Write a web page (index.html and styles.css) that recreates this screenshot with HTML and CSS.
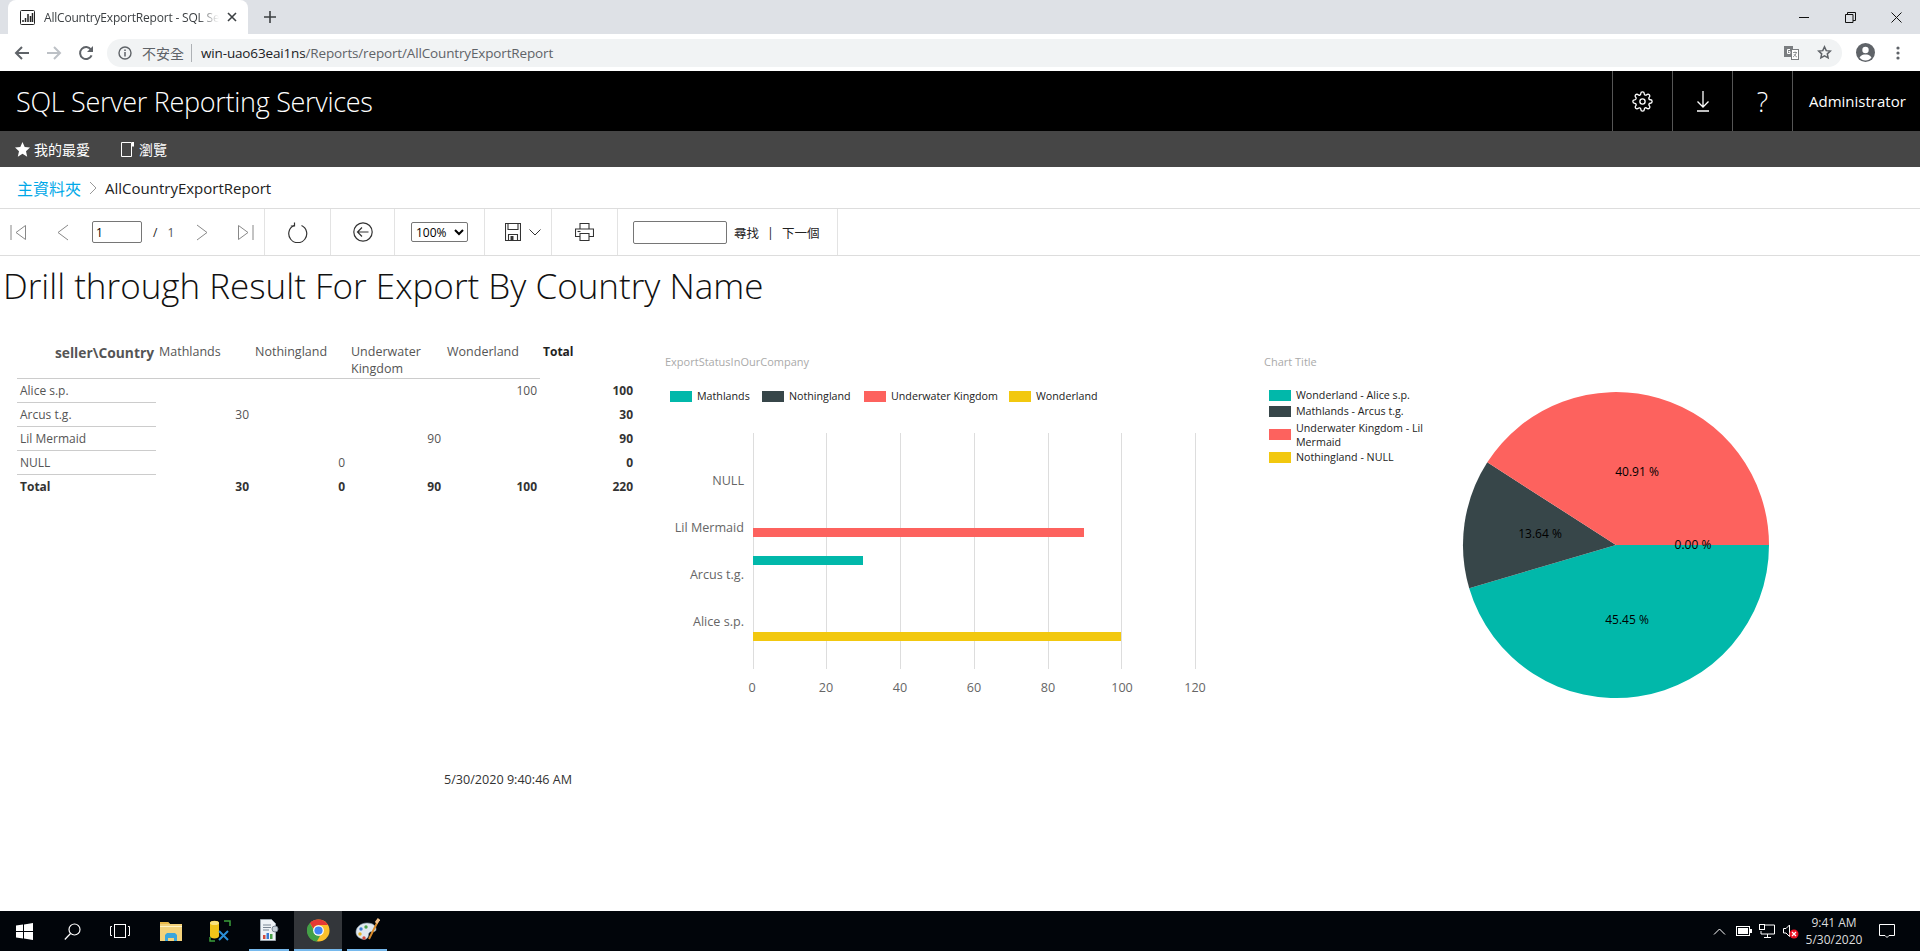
FILE: index.html
```html
<!DOCTYPE html>
<html lang="zh-Hant">
<head>
    <meta charset="UTF-8">
    <title>AllCountryExportReport - SQL Server Reporting Services</title>
    <link rel="stylesheet" href="styles.css">
</head>
<body>
    <div class="browser-tabs">
        <div class="tab">
            <svg class="tab-icon" width="15" height="15" viewBox="0 0 15 15"><rect x="0.5" y="0.5" width="14" height="14" rx="1" fill="#fff" stroke="#222"/><path d="M3 12v-2M5.5 12V8M8 12V4M10.5 12V6M12.5 12V3" stroke="#222" stroke-width="1.5"/></svg>
            <span class="tab-title">AllCountryExportReport - SQL Server Reporting Services</span>
            <svg width="10" height="10" viewBox="0 0 10 10"><path d="M1 1l8 8M9 1l-8 8" stroke="#3c4043" stroke-width="1.6"/></svg>
        </div>
        <svg class="new-tab" width="12" height="12" viewBox="0 0 12 12"><path d="M6 0v12M0 6h12" stroke="#3c4043" stroke-width="1.6"/></svg>
        <div class="window-controls">
            <svg width="11" height="11" viewBox="0 0 11 11"><path d="M0 5.5h10" stroke="#111"/></svg>
            <svg width="11" height="11" viewBox="0 0 11 11"><path d="M0.5 2.5h7.5v8H0.5zM2.5 2.5V0.5h8v8H8" fill="none" stroke="#111"/></svg>
            <svg width="11" height="11" viewBox="0 0 11 11"><path d="M0.5 0.5l10 10M10.5 0.5l-10 10" stroke="#111"/></svg>
        </div>
    </div>

    <div class="browser-bar">
        <svg width="16" height="16" viewBox="0 0 16 16"><path d="M15 8H2M8 2L2 8l6 6" fill="none" stroke="#5f6368" stroke-width="2"/></svg>
        <svg class="bar-forward" width="16" height="16" viewBox="0 0 16 16"><path d="M1 8h13M8 2l6 6-6 6" fill="none" stroke="#bdc1c6" stroke-width="2"/></svg>
        <svg class="bar-reload" width="16" height="16" viewBox="0 0 16 16"><path d="M13.600 10.400A6 6 0 1 1 13 4.600" fill="none" stroke="#5f6368" stroke-width="2"/><path d="M15 1v6H9z" fill="#5f6368"/></svg>
        <div class="omnibox">
            <svg width="14" height="14" viewBox="0 0 14 14"><circle cx="7" cy="7" r="6" fill="none" stroke="#5f6368" stroke-width="1.4"/><path d="M7 6v4.400M7 3.400v1.500" stroke="#5f6368" stroke-width="1.5"/></svg>
            <span class="not-secure">不安全</span>
            <span class="omni-sep"></span>
            <span class="url"><b>win-uao63eai1ns</b>/Reports/report/AllCountryExportReport</span>
            <svg class="omni-translate" width="15" height="14" viewBox="0 0 15 14"><rect x="0" y="0" width="9" height="11" fill="#7a7d80"/><path d="M6 3.500H3.500v4H6V5.500H4.500" fill="none" stroke="#fff"/><rect x="7.500" y="3.500" width="7" height="10" fill="#fff" stroke="#7a7d80"/><path d="M9 6.500h4M11 5.500v1M12.300 6.500c-.4 2-1.600 3.500-3.300 4.500M10 8c.5 1.300 1.500 2.300 3 3" fill="none" stroke="#7a7d80" stroke-width=".8"/></svg>
            <svg class="omni-star" width="15" height="15" viewBox="0 0 24 24"><path d="M12 3l2.800 6 6.500.8-4.800 4.400 1.300 6.500L12 17.500l-5.800 3.200 1.300-6.500-4.800-4.400 6.500-.8z" fill="none" stroke="#5f6368" stroke-width="2.400"/></svg>
        </div>
        <svg class="profile" width="19" height="19" viewBox="0 0 19 19"><circle cx="9.500" cy="9.500" r="9.500" fill="#5f6368"/><circle cx="9.500" cy="7" r="3.200" fill="#fff"/><path d="M3.500 14.500c1.500-2.500 3.800-3 6-3s4.500.5 6 3c-1.500 2-3.500 3-6 3s-4.500-1-6-3z" fill="#fff"/></svg>
        <svg class="browser-menu" width="4" height="14" viewBox="0 0 4 14"><circle cx="2" cy="2" r="1.600" fill="#5f6368"/><circle cx="2" cy="7" r="1.600" fill="#5f6368"/><circle cx="2" cy="12" r="1.600" fill="#5f6368"/></svg>
    </div>

    <div class="app-header">
        <div class="app-title">SQL Server Reporting Services</div>
        <div class="header-btn">
            <svg width="21" height="21" viewBox="0 0 24 24" fill="none" stroke="#fff" stroke-width="1.500"><circle cx="12" cy="12" r="3"/><path d="M19.400 15a1.650 1.650 0 0 0 .33 1.820l.06.06a2 2 0 0 1 0 2.830 2 2 0 0 1-2.830 0l-.06-.06a1.650 1.650 0 0 0-1.820-.33 1.650 1.650 0 0 0-1 1.510V21a2 2 0 0 1-2 2 2 2 0 0 1-2-2v-.09A1.650 1.650 0 0 0 9 19.400a1.650 1.650 0 0 0-1.820.33l-.06.06a2 2 0 0 1-2.830 0 2 2 0 0 1 0-2.830l.06-.06a1.650 1.650 0 0 0 .33-1.820 1.650 1.650 0 0 0-1.510-1H3a2 2 0 0 1-2-2 2 2 0 0 1 2-2h.09A1.650 1.650 0 0 0 4.600 9a1.650 1.650 0 0 0-.33-1.820l-.06-.06a2 2 0 0 1 0-2.830 2 2 0 0 1 2.830 0l.06.06a1.650 1.650 0 0 0 1.820.33H9a1.650 1.650 0 0 0 1-1.510V3a2 2 0 0 1 2-2 2 2 0 0 1 2 2v.09a1.650 1.650 0 0 0 1 1.510 1.650 1.650 0 0 0 1.820-.33l.06-.06a2 2 0 0 1 2.830 0 2 2 0 0 1 0 2.830l-.06.06a1.650 1.650 0 0 0-.33 1.820V9a1.650 1.650 0 0 0 1.510 1H21a2 2 0 0 1 2 2 2 2 0 0 1-2 2h-.09a1.650 1.650 0 0 0-1.510 1z"/></svg>
        </div>
        <div class="header-btn">
            <svg width="14" height="21" viewBox="0 0 14 21" fill="none" stroke="#fff" stroke-width="1.300"><path d="M7 0v16M1.500 10.500L7 16l5.500-5.500M1 20h12"/></svg>
        </div>
        <div class="header-btn help-btn">?</div>
        <div class="header-user">Administrator</div>
    </div>

    <div class="app-nav">
        <span class="nav-item">
            <svg width="15" height="15" viewBox="0 0 15 15"><path d="M7.500 0l2.200 5.100 5.300.5-4 3.600 1.200 5.500-4.700-2.900-4.700 2.900 1.200-5.500-4-3.600 5.300-.5z" fill="#fff"/></svg>
            我的最愛
        </span>
        <span class="nav-item nav-browse">
            <svg width="13" height="15" viewBox="0 0 13 15"><path d="M0.500 0.500h10v14h-10z" fill="none" stroke="#fff"/><path d="M11 0h2v5l-1-1-1 1z" fill="#fff"/></svg>
            瀏覽
        </span>
    </div>

    <div class="breadcrumb">
        <a class="crumb-link">主資料夾</a>
        <svg width="8" height="14" viewBox="0 0 8 14"><path d="M1 1l6 6-6 6" fill="none" stroke="#999"/></svg>
        <span class="crumb-current">AllCountryExportReport</span>
    </div>

    <div class="report-toolbar">
        <div class="tool-group pager">
            <svg width="16" height="17" viewBox="0 0 16 17" fill="none" stroke="#888"><path d="M1 1v15"/><path d="M15.500 1.500L6 8.500l9.500 7z"/></svg>
            <svg class="pager-prev" width="13" height="17" viewBox="0 0 13 17" fill="none" stroke="#888"><path d="M12 1L2 8.500l10 7.500"/></svg>
            <input class="page-input" type="text" value="1">
            <span class="page-slash">/</span>
            <span class="page-total">1</span>
            <svg class="pager-next" width="12" height="17" viewBox="0 0 12 17" fill="none" stroke="#888"><path d="M1 1l10 7.500L1 16"/></svg>
            <svg class="pager-last" width="16" height="17" viewBox="0 0 16 17" fill="none" stroke="#888"><path d="M15 1v15"/><path d="M0.500 1.500l9.500 7-9.500 7z"/></svg>
        </div>
        <div class="tool-group refresh">
            <svg width="20" height="21" viewBox="0 0 20 21" fill="none" stroke="#333" stroke-width="1.200"><path d="M6 3.500a9 9 0 1 0 7.500 0"/><path d="M6.500 0.500V4H2.800"/></svg>
        </div>
        <div class="tool-group back">
            <svg width="20" height="20" viewBox="0 0 20 20" fill="none" stroke="#333" stroke-width="1.200"><circle cx="10" cy="10" r="9.200"/><path d="M15.500 10H4.500M9 5.500L4.500 10 9 14.500"/></svg>
        </div>
        <div class="tool-group zoom">
            <select class="zoom-select"><option>100%</option></select>
        </div>
        <div class="tool-group save">
            <svg width="16" height="18" viewBox="0 0 16 18" fill="none" stroke="#333" stroke-width="1.100"><path d="M0.500 0.500h15v17H0.500z"/><path d="M3 0.500v6h10v-6M3.500 17.500v-6h9v6"/><rect x="5.500" y="13" width="3" height="4.500" fill="#333" stroke="none"/></svg>
            <svg width="12" height="7" viewBox="0 0 12 7" fill="none" stroke="#333"><path d="M0.500 0.500L6 6l5.500-5.500"/></svg>
        </div>
        <div class="tool-group print">
            <svg width="19" height="18" viewBox="0 0 19 18" fill="none" stroke="#333" stroke-width="1.100"><path d="M5 6V0.500h9V6M5 13.500H0.500V6h18v7.500H14"/><path d="M5 10.500h9v7H5z"/><path d="M2.500 8.500h3"/></svg>
        </div>
        <div class="tool-group find">
            <input class="find-input" type="text">
            <span>尋找</span>
            <span class="find-sep">|</span>
            <span>下一個</span>
        </div>
    </div>

    <main class="report">
        <h1 class="report-title">Drill through Result For Export By Country Name</h1>
        <div class="report-row">
            <div class="matrix-wrap">
                <table class="matrix">
                    <thead>
                        <tr>
                            <th class="corner">seller\Country</th>
                            <th>Mathlands</th>
                            <th>Nothingland</th>
                            <th>Underwater Kingdom</th>
                            <th>Wonderland</th>
                            <th class="total-head">Total</th>
                        </tr>
                    </thead>
                    <tbody>
                        <tr><td class="seller">Alice s.p.</td><td></td><td></td><td></td><td>100</td><td class="strong">100</td></tr>
                        <tr><td class="seller">Arcus t.g.</td><td>30</td><td></td><td></td><td></td><td class="strong">30</td></tr>
                        <tr><td class="seller">Lil Mermaid</td><td></td><td></td><td>90</td><td></td><td class="strong">90</td></tr>
                        <tr><td class="seller">NULL</td><td></td><td>0</td><td></td><td></td><td class="strong">0</td></tr>
                        <tr class="total-row"><td class="seller">Total</td><td>30</td><td>0</td><td>90</td><td>100</td><td>220</td></tr>
                    </tbody>
                </table>
            </div>

            <svg class="chart" width="600" height="380" viewBox="650 340 600 380">
                <text class="chart-title" x="665" y="365">ExportStatusInOurCompany</text>
                <rect class="c-teal" x="670" y="390" width="22" height="11"/>
                <text class="legend-text" x="697" y="399">Mathlands</text>
                <rect class="c-dark" x="762" y="390" width="22" height="11"/>
                <text class="legend-text" x="789" y="399">Nothingland</text>
                <rect class="c-red" x="864" y="390" width="22" height="11"/>
                <text class="legend-text" x="891" y="399">Underwater Kingdom</text>
                <rect class="c-yellow" x="1009" y="390" width="22" height="11"/>
                <text class="legend-text" x="1036" y="399">Wonderland</text>

                <path class="grid" d="M753.500 432v236M826.500 432v236M900.500 432v236M974.500 432v236M1048.500 432v236M1121.500 432v236M1195.500 432v236"/>

                <rect class="c-red" x="753" y="527" width="331" height="9"/>
                <rect class="c-teal" x="753" y="555" width="110" height="9"/>
                <rect class="c-yellow" x="753" y="631" width="368" height="9"/>

                <text class="axis-text end" x="744" y="484">NULL</text>
                <text class="axis-text end" x="744" y="531">Lil Mermaid</text>
                <text class="axis-text end" x="744" y="578">Arcus t.g.</text>
                <text class="axis-text end" x="744" y="625">Alice s.p.</text>

                <text class="axis-text mid" x="752" y="691">0</text>
                <text class="axis-text mid" x="826" y="691">20</text>
                <text class="axis-text mid" x="900" y="691">40</text>
                <text class="axis-text mid" x="974" y="691">60</text>
                <text class="axis-text mid" x="1048" y="691">80</text>
                <text class="axis-text mid" x="1122" y="691">100</text>
                <text class="axis-text mid" x="1195" y="691">120</text>
            </svg>

            <svg class="chart" width="540" height="380" viewBox="1250 340 540 380">
                <text class="chart-title" x="1264" y="365">Chart Title</text>
                <rect class="c-teal" x="1269" y="389" width="22" height="11"/>
                <text class="legend-text" x="1296" y="398">Wonderland - Alice s.p.</text>
                <rect class="c-dark" x="1269" y="405" width="22" height="11"/>
                <text class="legend-text" x="1296" y="414">Mathlands - Arcus t.g.</text>
                <rect class="c-red" x="1269" y="428" width="22" height="11"/>
                <text class="legend-text" x="1296" y="431">Underwater Kingdom - Lil</text>
                <text class="legend-text" x="1296" y="445">Mermaid</text>
                <rect class="c-yellow" x="1269" y="451" width="22" height="11"/>
                <text class="legend-text" x="1296" y="460">Nothingland - NULL</text>

                <path class="c-teal" d="M1616 544H1769A153 153 0 0 1 1469.200 587.200Z"/>
                <path class="c-dark" d="M1616 544L1469.200 587.200A153 153 0 0 1 1487.300 461.300Z"/>
                <path class="c-red" d="M1616 544L1487.300 461.300A153 153 0 0 1 1769 544Z"/>

                <text class="pie-text" x="1637" y="475">40.91 %</text>
                <text class="pie-text" x="1540" y="537">13.64 %</text>
                <text class="pie-text" x="1693" y="548">0.00 %</text>
                <text class="pie-text" x="1627" y="623">45.45 %</text>
            </svg>
        </div>
        <div class="report-date">5/30/2020 9:40:46 AM</div>
    </main>

    <div class="taskbar">
        <div class="task-left">
            <span class="task-btn">
                <svg width="17" height="17" viewBox="0 0 17 17"><path d="M0 2.600L7 1.600v6.400H0zM8 1.400L17 0v8H8zM0 9h7v6.400L0 14.400zM8 9h9v8L8 15.600z" fill="#fff"/></svg>
            </span>
            <span class="task-btn">
                <svg width="17" height="17" viewBox="0 0 17 17" fill="none" stroke="#fff" stroke-width="1.200"><circle cx="10.500" cy="6.500" r="5.500"/><path d="M6.500 10.500L0.800 16.500"/></svg>
            </span>
            <span class="task-btn">
                <svg width="20" height="14" viewBox="0 0 20 14" fill="none" stroke="#fff"><rect x="4.500" y="0.500" width="11" height="13"/><path d="M2 2.500H0.500v9H2M18 2.500h1.500v9H18"/></svg>
            </span>
            <span class="task-btn app-folder">
                <svg width="22" height="20" viewBox="0 0 22 20"><path d="M0 1h8l2 2h12v17H0z" fill="#f3d27b"/><path d="M0 1h8l2 2H0z" fill="#e9b949"/><path d="M0 5h22v1H0z" fill="#fff3c4"/><path d="M5 20v-6l2-2h8l2 2v6h-3v-3H8v3z" fill="#3aa5dc"/></svg>
            </span>
            <span class="task-btn app-tools">
                <svg width="22" height="22" viewBox="0 0 22 22"><path d="M1 3c0-3 9-3 9 0v13c0 1.500-2 2.500-4.500 2.500S1 17.500 1 16z" fill="#f0c419"/><ellipse cx="5.500" cy="3" rx="4.500" ry="2" fill="#f9e37c"/><path d="M15 1h6v5M1 17v4h5" fill="none" stroke="#3ba03b" stroke-width="1.500"/><path d="M10 11l9 9M19 11l-9 9" stroke="#2a8fd8" stroke-width="2"/></svg>
            </span>
            <span class="task-btn app-report">
                <svg width="19" height="22" viewBox="0 0 19 22"><path d="M0.500 0.500h11l4 4v17H0.500z" fill="#eef2f6" stroke="#9aa4ad"/><path d="M3 6h8M3 8.500h8M3 11h6" stroke="#7b8794"/><rect x="3" y="16" width="2.500" height="4" fill="#d34a3a"/><rect x="6.500" y="14" width="2.500" height="6" fill="#3a7bd3"/><rect x="10" y="15" width="2.500" height="5" fill="#4aa14a"/><circle cx="15" cy="10" r="3" fill="#c9d2da" stroke="#7b8794"/></svg>
            </span>
            <span class="task-btn active">
                <svg width="23" height="23" viewBox="0 0 24 24"><circle cx="12" cy="12" r="11.500" fill="#fbc02d"/><path d="M12 .5a11.500 11.500 0 0 1 10 5.800H12a5.700 5.700 0 0 0-5.400 3.800L3 4.200A11.500 11.500 0 0 1 12 .5z" fill="#e53935"/><path d="M3 4.200l5 8.800a5.700 5.700 0 0 0 5.700 4.500l-3.500 6A11.500 11.500 0 0 1 3 4.200z" fill="#43a047"/><circle cx="12" cy="12" r="5.600" fill="#fff"/><circle cx="12" cy="12" r="4.300" fill="#4285f4"/></svg>
            </span>
            <span class="task-btn paint">
                <svg width="25" height="25" viewBox="0 0 25 25"><path d="M1 14c0-5 5-9 11-9s9 3 9 6c0 4-4 2-6 3s-1 3-2 5-3 3-6 2-6-3-6-7z" fill="#dfe7ee" stroke="#8aa0b0" stroke-width=".6"/><circle cx="6" cy="11" r="1.700" fill="#3a7bd3"/><circle cx="11" cy="9" r="1.700" fill="#4aa14a"/><circle cx="5" cy="16" r="1.700" fill="#e5b32a"/><circle cx="9" cy="20" r="1.700" fill="#d34a3a"/><path d="M14 21L23 3" stroke="#d88a2a" stroke-width="2"/><path d="M21 5l3-4" stroke="#f0c08a" stroke-width="3"/></svg>
            </span>
        </div>
        <div class="tray">
            <svg width="13" height="7" viewBox="0 0 13 7" fill="none" stroke="#fff"><path d="M1 6.500l5.500-5.500 5.500 5.500"/></svg>
            <svg class="tray-battery" width="16" height="10" viewBox="0 0 16 10"><rect x="0.500" y="0.500" width="13" height="9" fill="none" stroke="#fff"/><rect x="2" y="2" width="10" height="6" fill="#fff"/><rect x="14" y="3" width="2" height="4" fill="#fff"/></svg>
            <svg class="tray-network" width="16" height="14" viewBox="0 0 16 14" fill="none" stroke="#fff"><path d="M5.500 1h10v9H2V7M8.500 10v3M5 13.500h7"/><rect x="0.500" y="0.500" width="5" height="5"/></svg>
            <svg class="tray-volume" width="16" height="16" viewBox="0 0 16 16"><path d="M0.500 5.500h2.500L6.500 2v11.500L3 10H.5z" fill="none" stroke="#fff"/><circle cx="11" cy="11" r="4.500" fill="#e81123"/><path d="M9 9l4 4M13 9l-4 4" stroke="#fff" stroke-width="1.200"/></svg>
            <span class="clock">9:41 AM<br>5/30/2020</span>
            <svg class="notify" width="16" height="16" viewBox="0 0 16 16"><path d="M0.500 1.500h15v11H10L8 14.500 6 12.500H.5z" fill="none" stroke="#fff"/></svg>
        </div>
    </div>
</body>
</html>
```

FILE: styles.css
```css
* {
    margin: 0;
    padding: 0;
    box-sizing: border-box;
}

body {
    font-family: "Open Sans", "Noto Sans CJK TC", sans-serif;
    background: white;
    width: 1920px;
    height: 951px;
    display: flex;
    flex-direction: column;
    overflow: hidden;
    color: #222;
}

/* browser chrome */
.browser-tabs {
    height: 34px;
    flex-shrink: 0;
    background: #dee1e6;
    display: flex;
    align-items: center;
    padding-left: 8px;
}

.tab {
    width: 240px;
    height: 34px;
    background: white;
    border-radius: 8px 8px 0 0;
    display: flex;
    align-items: center;
    padding-left: 12px;
}

.tab-icon {
    flex-shrink: 0;
}

.tab-title {
    width: 175px;
    margin: 0 8px 0 9px;
    font-size: 12px;
    letter-spacing: -0.2px;
    color: #3c4043;
    white-space: nowrap;
    overflow: hidden;
    -webkit-mask-image: linear-gradient(to right, #000 88%, transparent 100%);
}

.new-tab {
    margin-left: 16px;
}

.window-controls {
    margin-left: auto;
    display: flex;
    gap: 35px;
    padding-right: 18px;
}

.browser-bar {
    height: 37px;
    flex-shrink: 0;
    background: white;
    display: flex;
    align-items: center;
    padding-left: 14px;
}

.bar-forward {
    margin-left: 16px;
}

.bar-reload {
    margin-left: 16px;
}

.omnibox {
    width: 1735px;
    height: 28px;
    margin-left: 13px;
    background: #f1f3f4;
    border-radius: 14px;
    display: flex;
    align-items: center;
    padding: 0 10px 0 11px;
    font-size: 13.500px;
}

.not-secure {
    margin-left: 10px;
    color: #5f6368;
    font-size: 14px;
}

.omni-sep {
    width: 1px;
    height: 18px;
    background: #aeb1b5;
    margin: 0 9px 0 7px;
}

.url {
    color: #5f6368;
    letter-spacing: -0.15px;
}

.url b {
    font-weight: 400;
    color: #202124;
}

.omni-translate {
    margin-left: auto;
}

.omni-star {
    margin-left: 18px;
}

.profile {
    margin-left: 14px;
}

.browser-menu {
    margin-left: 21px;
}

/* portal header */
.app-header {
    height: 60px;
    flex-shrink: 0;
    background: black;
    color: white;
    display: flex;
    align-items: center;
}

.app-title {
    margin-left: 16px;
    margin-right: auto;
    font-size: 27px;
    font-weight: 300;
    letter-spacing: -0.3px;
}

.header-btn {
    width: 60px;
    height: 60px;
    border-left: 1px solid #555;
    display: flex;
    align-items: center;
    justify-content: center;
}

.help-btn {
    font-size: 27px;
    font-weight: 300;
}

.header-user {
    width: 128px;
    height: 60px;
    border-left: 1px solid #555;
    display: flex;
    align-items: center;
    padding-left: 16px;
    font-size: 15px;
}

.app-nav {
    height: 36px;
    flex-shrink: 0;
    background: #464646;
    color: white;
    display: flex;
    align-items: center;
    padding-left: 15px;
    font-size: 14px;
}

.nav-item {
    display: flex;
    align-items: center;
    gap: 4px;
}

.nav-browse {
    margin-left: 31px;
    gap: 5px;
}

.breadcrumb {
    height: 41px;
    flex-shrink: 0;
    display: flex;
    align-items: center;
    padding-left: 17px;
    font-size: 16px;
    gap: 8px;
}

.crumb-link {
    color: #00a8e8;
}

.crumb-current {
    color: #222;
    font-size: 15px;
}

/* report viewer toolbar */
.report-toolbar {
    height: 48px;
    flex-shrink: 0;
    border-top: 1px solid #ddd;
    border-bottom: 1px solid #ddd;
    display: flex;
    align-items: stretch;
}

.tool-group {
    display: flex;
    align-items: center;
    justify-content: center;
    border-right: 1px solid #e3e3e3;
}

.pager {
    width: 265px;
    justify-content: flex-start;
    padding-left: 10px;
    font-size: 12px;
}

.pager-prev {
    margin-left: 30px;
}

.page-input {
    width: 50px;
    height: 22px;
    margin-left: 23px;
    padding-left: 3px;
    border: 1px solid #767676;
    border-radius: 2px;
    font-family: "Open Sans", sans-serif;
    font-size: 12px;
    color: #000;
}

.page-slash {
    margin-left: 11px;
}

.page-total {
    margin-left: 10px;
    color: #555;
}

.pager-next {
    margin-left: 22px;
}

.pager-last {
    margin-left: 30px;
}

.refresh {
    width: 66px;
}

.back {
    width: 64px;
}

.zoom {
    width: 90px;
}

.zoom-select {
    width: 57px;
    height: 20px;
    border: 1px solid #767676;
    border-radius: 2px;
    background: white;
    font-family: "Open Sans", sans-serif;
    font-size: 12px;
    color: #000;
}

.save {
    width: 67px;
    justify-content: flex-start;
    padding-left: 20px;
    gap: 8px;
}

.print {
    width: 66px;
}

.find {
    width: 220px;
    justify-content: flex-start;
    padding-left: 15px;
    font-size: 12.500px;
}

.find-input {
    width: 94px;
    height: 23px;
    margin-right: 7px;
    border: 1px solid #767676;
    border-radius: 2px;
}

.find-sep {
    margin: 0 8px;
}

/* report body */
.report {
    flex: 1;
    min-height: 0;
}

.report-title {
    height: 85px;
    padding: 5px 0 0 3px;
    font-size: 35px;
    font-weight: 300;
    line-height: 50px;
    color: #111;
}

.report-row {
    display: flex;
    height: 380px;
}

.matrix-wrap {
    width: 650px;
    flex-shrink: 0;
    padding-left: 17px;
}

.matrix {
    border-collapse: collapse;
    table-layout: fixed;
    width: 619px;
    font-size: 12px;
    color: #555;
}

.matrix th {
    width: 96px;
    height: 37px;
    padding: 2px 14px 0 3px;
    border-bottom: 1px solid #ccc;
    font-size: 12.500px;
    font-weight: 400;
    line-height: 17px;
    text-align: left;
    vertical-align: top;
}

.matrix th.corner {
    width: 139px;
    padding: 3px 2px 0 0;
    font-size: 13.800px;
    font-weight: 700;
    text-align: right;
}

.matrix th.total-head {
    font-size: 12px;
    font-weight: 700;
    color: #222;
    border-bottom: none;
}

.matrix td {
    height: 24px;
    padding: 0 3px;
    text-align: right;
}

.matrix td.seller {
    text-align: left;
    border-bottom: 1px solid #ccc;
}

.matrix td.strong,
.total-row td {
    font-weight: 700;
    color: #333;
}

.total-row td.seller {
    border-bottom: none;
}

/* charts */
.chart {
    flex-shrink: 0;
}

.chart text {
    font-family: "Open Sans", sans-serif;
}

.chart-title {
    font-size: 11px;
    fill: #aaa;
}

.legend-text {
    font-size: 10.700px;
    fill: #222;
}

.axis-text {
    font-size: 12.600px;
    fill: #666;
}

.end {
    text-anchor: end;
}

.mid {
    text-anchor: middle;
}

.pie-text {
    font-size: 12px;
    fill: #000;
    text-anchor: middle;
}

.grid {
    stroke: #ddd;
    fill: none;
}

.c-teal { fill: #01b8aa; }
.c-dark { fill: #374649; }
.c-red { fill: #fd625e; }
.c-yellow { fill: #f2c80f; }

.report-date {
    margin-top: 50px;
    padding-left: 444px;
    font-size: 12.600px;
    color: #333;
}

/* windows taskbar */
.taskbar {
    height: 40px;
    flex-shrink: 0;
    background: #01050a;
    display: flex;
    justify-content: space-between;
}

.task-left {
    display: flex;
}

.task-btn {
    width: 48px;
    height: 40px;
    display: flex;
    align-items: center;
    justify-content: center;
}

.app-folder {
    margin-left: 3px;
}

.app-tools {
    margin-left: 1px;
}

.app-report {
    width: 40px;
    margin-left: 5px;
    border-bottom: 2px solid #76b9ed;
}

.task-btn.active {
    background: #33363a;
    border-bottom: 2px solid #76b9ed;
    margin-left: 5px;
}

.task-btn.paint {
    width: 40px;
    margin-left: 5px;
    border-bottom: 2px solid #76b9ed;
}

.tray {
    display: flex;
    align-items: center;
    color: #ddd;
    padding-right: 25px;
}

.tray-battery {
    margin-left: 10px;
}

.tray-network {
    margin-left: 7px;
}

.tray-volume {
    margin-left: 8px;
}

.clock {
    width: 64px;
    margin-left: 3px;
    font-size: 12px;
    line-height: 17px;
    text-align: center;
}

.notify {
    margin-left: 13px;
}
```
